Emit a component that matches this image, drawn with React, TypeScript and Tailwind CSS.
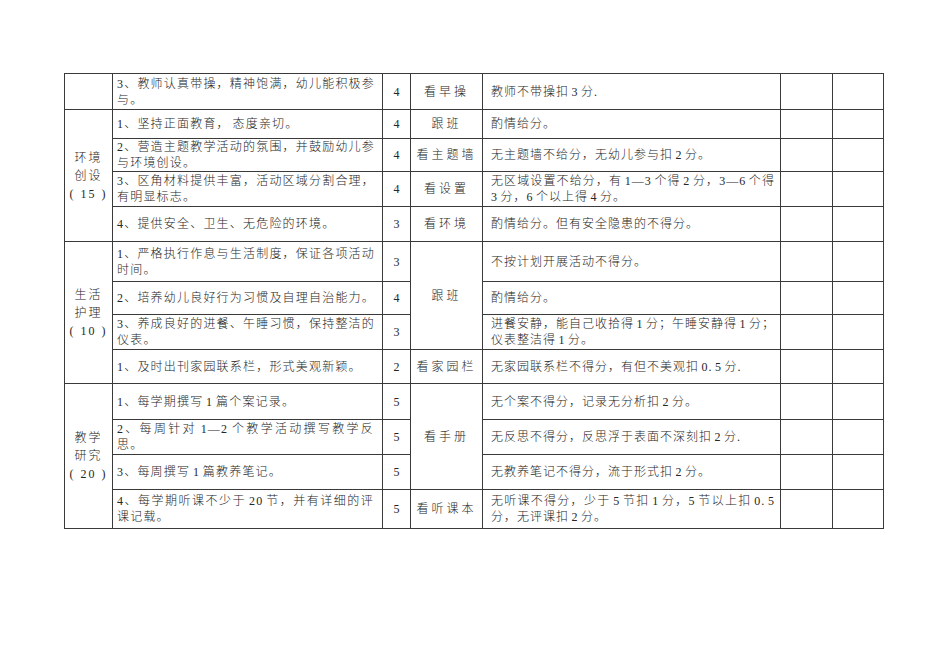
import React from "react";

type Row = {
  item: string[];
  score: string;
  method?: string;
  span?: number;
  rule: string[];
  h: number;
};

type Section = {
  label?: string[];
  rows: Row[];
};

const SECTIONS: Section[] = [
  {
    rows: [
      {
        item: ["3、教师认真带操，精神饱满，幼儿能积极参", "与。"],
        score: "4",
        method: "看早操",
        rule: ["教师不带操扣 3 分."],
        h: 36,
      },
    ],
  },
  {
    label: ["环境", "创设", "( 15 )"],
    rows: [
      {
        item: ["1、坚持正面教育， 态度亲切。"],
        score: "4",
        method: "跟班",
        rule: ["酌情给分。"],
        h: 29,
      },
      {
        item: ["2、营造主题教学活动的氛围，并鼓励幼儿参", "与环境创设。"],
        score: "4",
        method: "看主题墙",
        rule: ["无主题墙不给分，无幼儿参与扣 2 分。"],
        h: 32,
      },
      {
        item: ["3、区角材料提供丰富，活动区域分割合理，", "有明显标志。"],
        score: "4",
        method: "看设置",
        rule: ["无区域设置不给分，有 1—3 个得 2 分，3—6 个得", "3 分，6 个以上得 4 分。"],
        h: 35,
      },
      {
        item: ["4、提供安全、卫生、无危险的环境。"],
        score: "3",
        method: "看环境",
        rule: ["酌情给分。但有安全隐患的不得分。"],
        h: 35,
      },
    ],
  },
  {
    label: ["生活", "护理", "( 10 )"],
    rows: [
      {
        item: ["1、严格执行作息与生活制度，保证各项活动", "时间。"],
        score: "3",
        method: "跟班",
        span: 3,
        rule: ["不按计划开展活动不得分。"],
        h: 40,
      },
      {
        item: ["2、培养幼儿良好行为习惯及自理自治能力。"],
        score: "4",
        rule: ["酌情给分。"],
        h: 33,
      },
      {
        item: ["3、养成良好的进餐、午睡习惯，保持整洁的", "仪表。"],
        score: "3",
        rule: ["进餐安静，能自己收拾得 1 分；午睡安静得 1 分；", "仪表整洁得 1 分。"],
        h: 35,
      },
      {
        item: ["1、及时出刊家园联系栏，形式美观新颖。"],
        score: "2",
        method: "看家园栏",
        rule: ["无家园联系栏不得分，有但不美观扣 0. 5 分."],
        h: 34,
      },
    ],
  },
  {
    label: ["教学", "研究", "( 20 )"],
    rows: [
      {
        item: ["1、每学期撰写 1 篇个案记录。"],
        score: "5",
        method: "看手册",
        span: 3,
        rule: ["无个案不得分，记录无分析扣 2 分。"],
        h: 36,
      },
      {
        item: ["2、每周针对 1—2 个教学活动撰写教学反", "思。"],
        score: "5",
        rule: ["无反思不得分，反思浮于表面不深刻扣 2 分."],
        h: 35,
      },
      {
        item: ["3、每周撰写 1 篇教养笔记。"],
        score: "5",
        rule: ["无教养笔记不得分，流于形式扣 2 分。"],
        h: 35,
      },
      {
        item: ["4、每学期听课不少于 20 节，并有详细的评", "课记载。"],
        score: "5",
        method: "看听课本",
        rule: ["无听课不得分，少于 5 节扣 1 分，5 节以上扣 0. 5", "分，无评课扣 2 分。"],
        h: 39,
      },
    ],
  },
];

const FONT = "[font-family:'Liberation_Serif','Noto_Sans_CJK_SC',serif]";

function Lines({ lines }: { lines: string[] }) {
  return (
    <>
      {lines.map((line, i) => (
        <div
          key={i}
          className={
            i < lines.length - 1
              ? "whitespace-nowrap text-justify [text-align-last:justify]"
              : "whitespace-nowrap"
          }
        >
          {line}
        </div>
      ))}
    </>
  );
}

const cell = "border border-[#3a3a3a] align-middle";

export default function App() {
  return (
    <div className={`min-h-[672px] w-[950px] bg-white pl-[64px] pt-[73px] ${FONT}`}>
      <table className="w-[819px] table-fixed border-collapse text-[12px] font-light leading-[16px] tracking-[1.2px] text-[#262626] [word-spacing:-1.5px]">
        <colgroup>
          <col className="w-[48px]" />
          <col className="w-[270px]" />
          <col className="w-[28px]" />
          <col className="w-[72px]" />
          <col className="w-[298px]" />
          <col className="w-[52px]" />
          <col className="w-[51px]" />
        </colgroup>
        <tbody>
          {SECTIONS.map((section, si) =>
            section.rows.map((row, ri) => (
              <tr key={`${si}-${ri}`} style={{ height: row.h }}>
                {ri === 0 && (
                  <td
                    rowSpan={section.rows.length}
                    className={`${cell} text-center leading-[18px] tracking-[2px] [word-spacing:0px]`}
                  >
                    {section.label?.map((l) => (
                      <div key={l} className="whitespace-nowrap">
                        {l}
                      </div>
                    ))}
                  </td>
                )}
                <td className={`${cell} pl-[4px] pr-[8px]`}>
                  <Lines lines={row.item} />
                </td>
                <td className={`${cell} text-center tracking-normal`}>{row.score}</td>
                {row.method && (
                  <td
                    rowSpan={row.span ?? 1}
                    className={`${cell} whitespace-nowrap text-center tracking-[3px]`}
                  >
                    {row.method}
                  </td>
                )}
                <td className={`${cell} pl-[8px] pr-[5px] tracking-[1px]`}>
                  <Lines lines={row.rule} />
                </td>
                <td className={cell}></td>
                <td className={cell}></td>
              </tr>
            ))
          )}
        </tbody>
      </table>
    </div>
  );
}
